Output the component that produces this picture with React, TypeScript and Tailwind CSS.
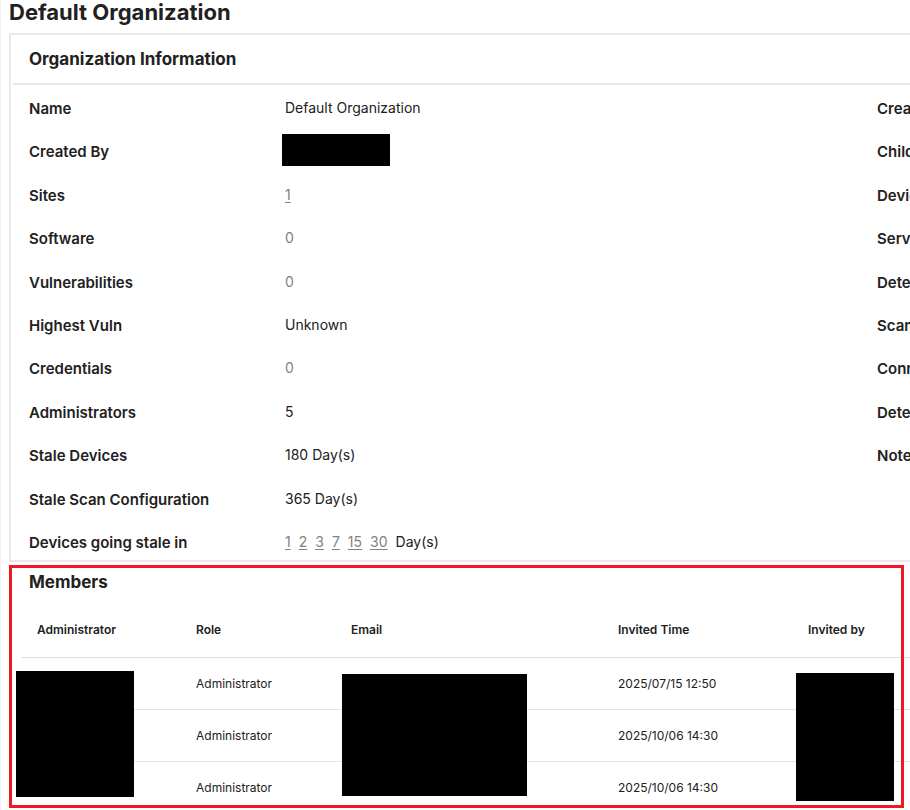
import type { ReactNode } from 'react'

interface Field {
  label: string
  value?: ReactNode
}

interface Member {
  role: string
  invitedTime: string
}

function Count({ children }: { children: ReactNode }) {
  return <span className="text-[#828282]">{children}</span>
}

function CountLink({ children }: { children: ReactNode }) {
  return (
    <a href="#" className="text-[#828282] underline decoration-1 underline-offset-2">
      {children}
    </a>
  )
}

const staleDays = [1, 2, 3, 7, 15, 30]

const fields: Field[] = [
  { label: 'Name', value: 'Default Organization' },
  { label: 'Created By', value: <span className="absolute -left-[3px] -top-[7px] h-8 w-[108px] bg-black" /> },
  { label: 'Sites', value: <CountLink>1</CountLink> },
  { label: 'Software', value: <Count>0</Count> },
  { label: 'Vulnerabilities', value: <Count>0</Count> },
  { label: 'Highest Vuln', value: 'Unknown' },
  { label: 'Credentials', value: <Count>0</Count> },
  { label: 'Administrators', value: '5' },
  { label: 'Stale Devices', value: '180 Day(s)' },
  { label: 'Stale Scan Configuration', value: '365 Day(s)' },
  {
    label: 'Devices going stale in',
    value: (
      <span className="flex gap-2">
        {staleDays.map(day => (
          <CountLink key={day}>{day}</CountLink>
        ))}
        <span>Day(s)</span>
      </span>
    ),
  },
]

const moreFields: Field[] = [
  { label: 'Created' },
  { label: 'Child Organizations' },
  { label: 'Devices' },
  { label: 'Services' },
  { label: 'Detected Software' },
  { label: 'Scanners' },
  { label: 'Connectors' },
  { label: 'Detections' },
  { label: 'Notes' },
  { label: '' },
  { label: '' },
]

const members: Member[] = [
  { role: 'Administrator', invitedTime: '2025/07/15 12:50' },
  { role: 'Administrator', invitedTime: '2025/10/06 14:30' },
  { role: 'Administrator', invitedTime: '2025/10/06 14:30' },
]

function FieldList({ items }: { items: Field[] }) {
  return (
    <dl className="flex min-h-[454px] w-[848px] shrink-0 flex-col justify-between">
      {items.map((item, i) => (
        <div key={i} className="flex h-5 whitespace-nowrap">
          <dt className="w-64 shrink-0 text-[15px] font-semibold leading-[22px]">{item.label}</dt>
          <dd className="relative text-sm leading-5">{item.value}</dd>
        </div>
      ))}
    </dl>
  )
}

export default function App() {
  return (
    <div className="flex h-screen flex-col overflow-hidden border-l border-[#f3f3fb] bg-white pl-2 font-['Inter',sans-serif] text-[#212121]">
      <h1 className="h-[33px] shrink-0 text-[22px] font-bold leading-6">Default Organization</h1>

      <section className="shrink-0 overflow-hidden border-2 border-r-0 border-[#ece8e9]">
        <div className="pl-0.5">
          <h2 className="border-b-2 border-[#ece8e9] py-3 pl-4 text-[17px] font-bold leading-6">
            Organization Information
          </h2>
        </div>
        <div className="flex pb-2 pl-[18px] pt-[13px]">
          <FieldList items={fields} />
          <FieldList items={moreFields} />
        </div>
      </section>

      <section className="relative mt-[3px] min-h-0 flex-1">
        <h2 className="pl-5 pt-[5px] text-[17px] font-bold leading-6">Members</h2>
        <div className="mt-2 pl-3">
          <table className="w-full table-fixed border-collapse text-left text-xs">
            <thead>
              <tr className="h-[55px] border-b border-[#dedede]">
                <th className="w-[159px] pl-4 pt-0.5 font-semibold">Administrator</th>
                <th className="w-[155px] pl-4 pt-0.5 font-semibold">Role</th>
                <th className="w-[267px] pl-4 pt-0.5 font-semibold">Email</th>
                <th className="w-[190px] pl-4 pt-0.5 font-semibold">Invited Time</th>
                <th className="pl-4 pt-0.5 font-semibold">Invited by</th>
              </tr>
            </thead>
            <tbody>
              {members.map((member, i) => (
                <tr key={i} className="h-[52px] border-b border-[#e3e3e3]">
                  <td />
                  <td className="pl-4 pt-0.5">{member.role}</td>
                  <td />
                  <td className="pl-4 pt-0.5">{member.invitedTime}</td>
                  <td />
                </tr>
              ))}
            </tbody>
          </table>
        </div>

        {/* redacted names, emails and inviters */}
        <div className="absolute left-[7px] top-[106px] h-[126px] w-[118px] bg-black" />
        <div className="absolute left-[333px] top-[109px] h-[122px] w-[185px] bg-black" />
        <div className="absolute left-[787px] top-[108px] h-32 w-[98px] bg-black" />

        {/* highlight frame */}
        <div className="pointer-events-none absolute bottom-0.5 left-0 right-1.5 top-0 border-3 border-[#ed1c24]" />
      </section>
    </div>
  )
}
